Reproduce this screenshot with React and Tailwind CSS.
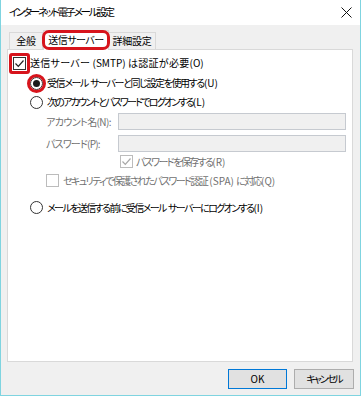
import React from 'react';

const font = { fontFamily: '"Noto Sans CJK JP", "Noto Sans", sans-serif' };

const Radio = ({ checked }) => (
  <span className="inline-flex w-[13px] h-[13px] rounded-full border border-[#333333] bg-white items-center justify-center shrink-0">
    {checked && <span className="block w-[7px] h-[7px] rounded-full bg-[#1a1a1a]" />}
  </span>
);

const Check = ({ checked, disabled }) => (
  <span
    className={`inline-flex w-[13px] h-[13px] border items-center justify-center shrink-0 ${
      disabled ? 'border-[#bcbcbc] bg-white' : 'border-[#333333] bg-white'
    }`}
  >
    {checked && (
      <svg width="11" height="11" viewBox="0 0 11 11">
        <path
          d="M1.5 5.5 L4.3 8.3 L9.5 2.5"
          fill="none"
          stroke={disabled ? '#a8a8a8' : '#222'}
          strokeWidth="1.2"
        />
      </svg>
    )}
  </span>
);

export default function App() {
  return (
    <div
      style={font}
      className="w-[361px] h-[396px] flex flex-col bg-[#f0f0f0] border-x border-b border-[#7fd4e0] text-[10px] text-black [font-feature-settings:'palt'] leading-none whitespace-pre"
    >
      {/* Title bar */}
      <div className="h-[25px] bg-white flex items-center justify-between pl-[8px] pr-[7px] shrink-0">
        <span className="text-[10.5px] tracking-[-2.3px]">インターネット電子メール設定</span>
        <svg width="11" height="11" viewBox="0 0 11 11" className="mr-[1px]">
          <path d="M0.5 0.5 L10.5 10.5 M10.5 0.5 L0.5 10.5" stroke="#111" strokeWidth="1" />
        </svg>
      </div>

      {/* Tabs */}
      <div className="flex items-end h-[19px] mt-[5px] pl-[8px] shrink-0 relative z-10">
        <div className="w-[34px] h-[17px] border border-b-0 border-[#d9d9d9] bg-[#f0f0f0] flex items-center justify-center tracking-[-0.3px]">
          全般
        </div>
        <div className="relative w-[66px] h-[20px] border border-b-0 border-[#d9d9d9] bg-white flex items-center justify-center -mb-px pb-[1px] tracking-[-0.5px]">
          送信サーバー
          <span className="absolute -left-[2px] -right-[2px] -top-[1px] bottom-0 border-[3px] border-[#d7141c] rounded-[7px]" />
        </div>
        <div className="w-[47px] h-[17px] border border-b-0 border-l-0 border-[#d9d9d9] bg-[#f0f0f0] flex items-center justify-center tracking-[-0.3px]">
          詳細設定
        </div>
      </div>

      {/* Panel */}
      <div className="ml-[6px] w-[346px] h-[313px] border border-[#d9d9d9] bg-white shrink-0 flex flex-col pt-[3px]">
        <div className="h-[20px] flex items-center pl-[5px] gap-[4px]">
          <span className="relative inline-flex">
            <Check checked />
            <span className="absolute -left-[4px] -top-[4px] -right-[4px] -bottom-[4px] border-[3px] border-[#d7141c] rounded-[3px]" />
          </span>
          <span>
            <span className="tracking-[0.3px]">送信サーバー</span> (SMTP) <span className="tracking-[0.3px]">は認証が必要</span>(O)
          </span>
        </div>

        <div className="h-[20px] flex items-center pl-[22px] gap-[4px]">
          <span className="relative inline-flex">
            <Radio checked />
            <span className="absolute -left-[3px] -top-[3px] -right-[3px] -bottom-[3px] border-[3px] border-[#d7141c] rounded-full" />
          </span>
          <span>
            <span className="tracking-[-1.4px]">受信メール</span> <span className="tracking-[-1.4px]">サーバーと同じ設定を使用する</span>(U)
          </span>
        </div>

        <div className="h-[18px] flex items-center pl-[22px] gap-[4px]">
          <Radio />
          <span>
            <span className="tracking-[-1.8px]">次のアカウントとパスワードでログオンする</span>(L)
          </span>
        </div>

        <div className="mt-[2px] flex items-center pl-[38px] text-[#6f6f6f]">
          <span className="w-[72px] tracking-[-0.6px]">アカウント名(N):</span>
          <div className="w-[228px] h-[17px] border border-[#c6cad0] bg-[#f0f0f0]" />
        </div>

        <div className="mt-[5px] flex items-center pl-[38px] text-[#6f6f6f]">
          <span className="w-[72px] tracking-[-0.8px]">パスワード(P):</span>
          <div className="w-[228px] h-[17px] border border-[#c6cad0] bg-[#f0f0f0]" />
        </div>

        <div className="h-[19px] flex items-center pl-[112px] gap-[3px] text-[#6f6f6f]">
          <Check checked disabled />
          <span>
            <span className="tracking-[-1.6px]">パスワードを保存する</span>(R)
          </span>
        </div>

        <div className="h-[19px] flex items-center pl-[38px] gap-[4px] text-[#6f6f6f]">
          <Check disabled />
          <span>
            <span className="tracking-[-1.6px]">セキュリティで保護されたパスワード認証</span> (SPA) <span className="tracking-[-1.6px]">に対応</span>(Q)
          </span>
        </div>

        <div className="mt-[8px] h-[19px] flex items-center pl-[22px] gap-[4px]">
          <Radio />
          <span>
            <span className="tracking-[-1.6px]">メールを送信する前に受信メール</span> <span className="tracking-[-1.6px]">サーバーにログオンする</span>(I)
          </span>
        </div>
      </div>

      {/* Buttons */}
      <div className="flex justify-end gap-[7px] pr-[6px] mt-[7px]">
        <button className="w-[59px] h-[20px] border border-[#0078d7] bg-[#e1e1e1] flex items-center justify-center">
          OK
        </button>
        <button className="w-[60px] h-[20px] border border-[#adadad] bg-[#e1e1e1] flex items-center justify-center tracking-[-2px]">
          キャンセル
        </button>
      </div>
    </div>
  );
}
